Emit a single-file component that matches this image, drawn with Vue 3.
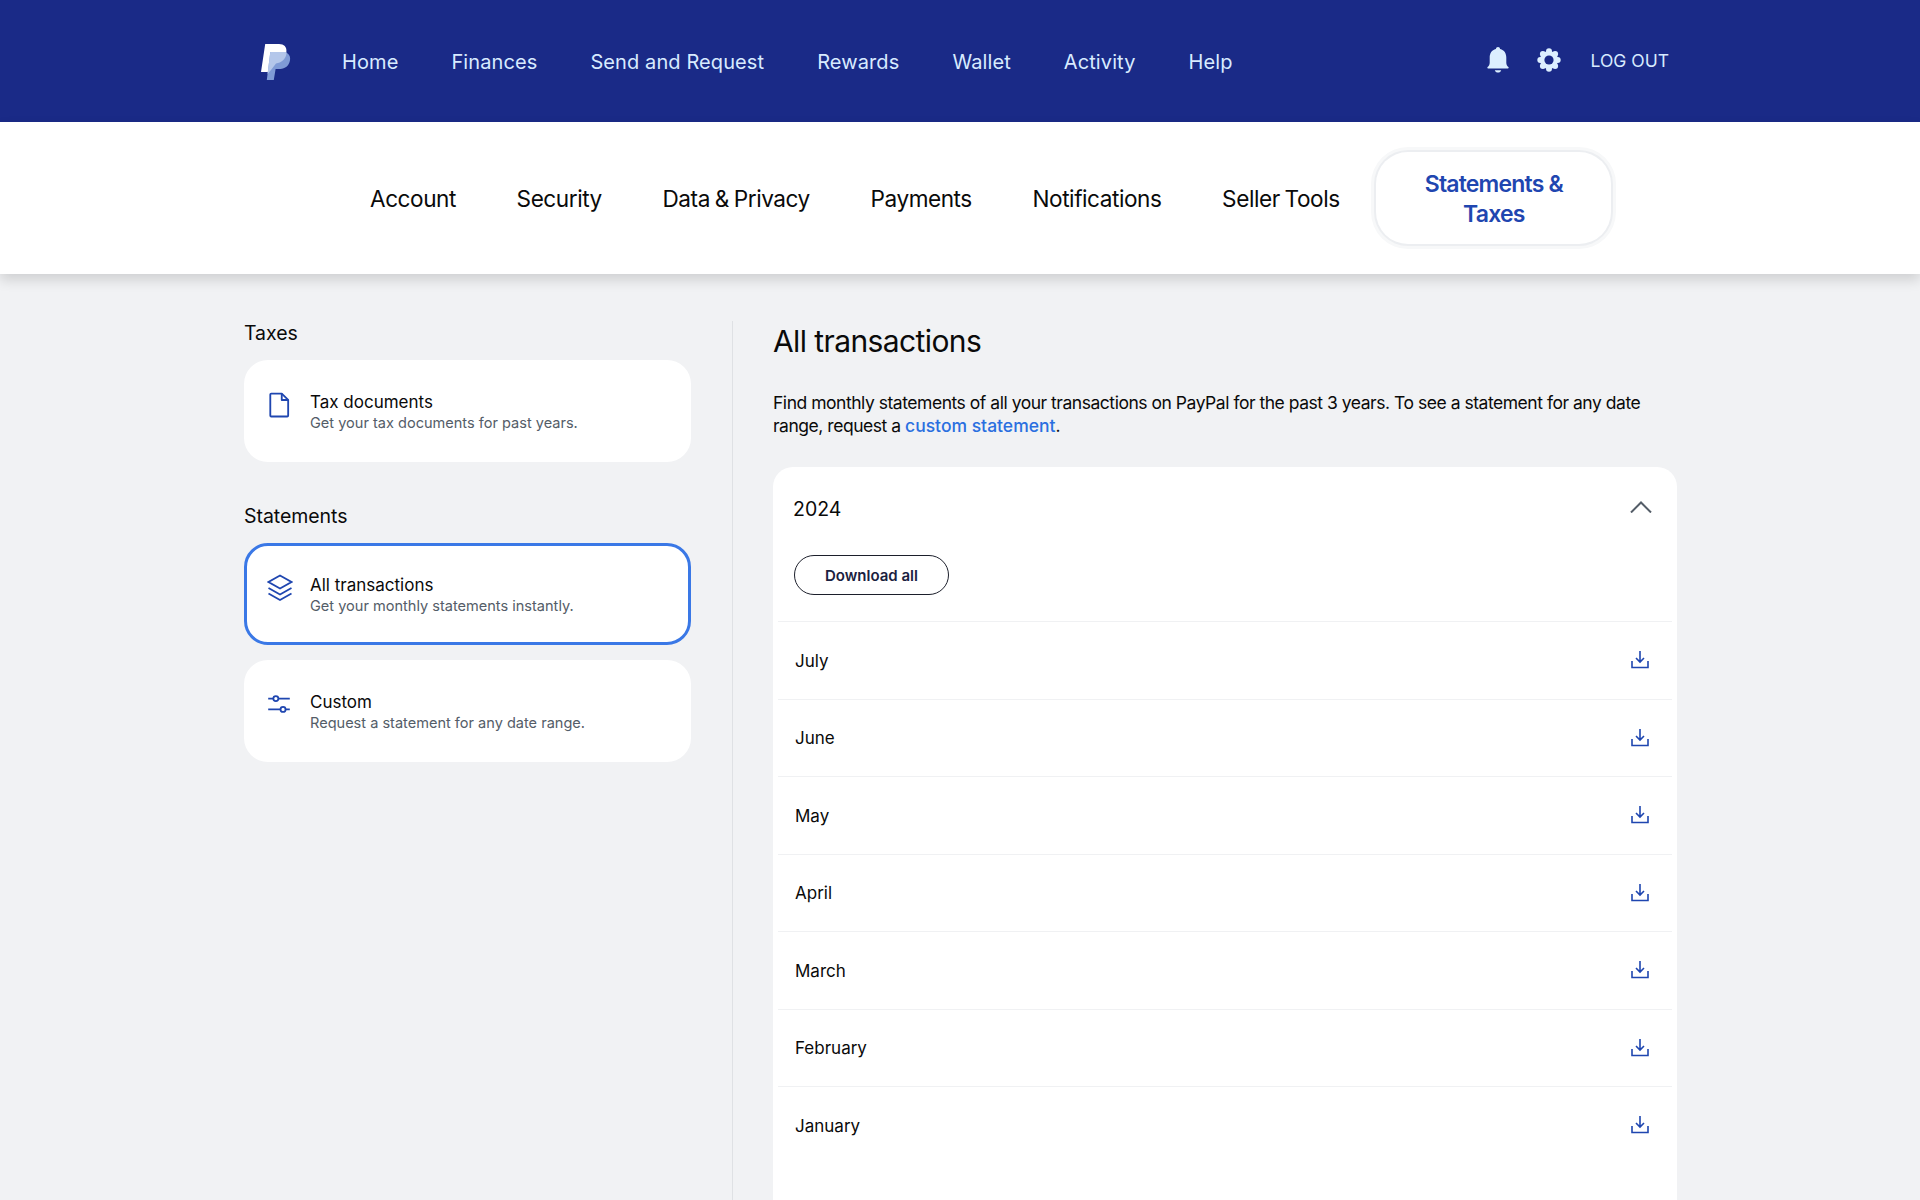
<script setup>
const top = ['Home', 'Finances', 'Send and Request', 'Rewards', 'Wallet', 'Activity', 'Help']
const sub = ['Account', 'Security', 'Data & Privacy', 'Payments', 'Notifications', 'Seller Tools']
const months = ['July', 'June', 'May', 'April', 'March', 'February', 'January']
</script>

<template>
  <div class="page">
    <header class="topbar">
      <svg class="logo" viewBox="0 0 30 36" width="30" height="36">
        <path d="M4.2 0H18c5 0 8 3 7.4 7.6C24.7 13 21 17 15 17.300L9.800 28H0Z" fill="#fff" />
        <path d="M9.300 8H21.500C26.500 8 30 11.200 29 16.300 28 21.700 24 25 19.300 25H14.600L12.800 36H5.800Z" fill="#7f9bd6" />
        <path d="M9.300 8H25.300C25.500 8.500 25.500 9.500 25.300 10.500 24.300 15 20.500 18.800 15 19.400L10 26 6.500 30Z" fill="#b4c7ea" />
      </svg>
      <nav class="top-links">
        <a v-for="t in top" :key="t" class="top-link">{{ t }}</a>
      </nav>
      <div class="top-actions">
        <svg class="bell" viewBox="0 0 22 26" width="22" height="26">
          <path d="M11 0c1.200 0 2 .8 2.100 1.900C17.300 2.900 19.300 6.300 19.300 10.500v5.300c0 2 .8 3.200 2.100 4.200.5.500.3 1.500-.5 1.500H1.100c-.8 0-1-1-.5-1.500 1.300-1 2.100-2.200 2.100-4.200v-5.300C2.700 6.300 4.700 2.900 8.900 1.900 9 .8 9.800 0 11 0Z" fill="#dcefff" />
          <path d="M7.800 23.200h6.400C13.800 24.700 12.500 25.500 11 25.500S8.200 24.700 7.800 23.200Z" fill="#dcefff" />
        </svg>
        <svg class="gear" viewBox="0 0 24 24" width="24" height="24">
          <g fill="#dcefff">
            <circle cx="12" cy="12" r="9" />
            <circle cx="12" cy="3.300" r="3" />
            <circle cx="12" cy="20.700" r="3" />
            <circle cx="3.300" cy="12" r="3" />
            <circle cx="20.700" cy="12" r="3" />
            <circle cx="5.900" cy="5.900" r="3" />
            <circle cx="18.100" cy="5.900" r="3" />
            <circle cx="5.900" cy="18.100" r="3" />
            <circle cx="18.100" cy="18.100" r="3" />
          </g>
          <circle cx="12" cy="12" r="4.600" fill="#1a2a87" />
        </svg>
        <span class="logout">LOG OUT</span>
      </div>
    </header>

    <nav class="subbar">
      <a v-for="s in sub" :key="s" class="sub-link">{{ s }}</a>
      <a class="sub-active">Statements &amp;<br />Taxes</a>
    </nav>

    <div class="content">
      <aside class="side">
        <h2 class="side-title">Taxes</h2>
        <div class="card">
          <svg class="card-icon doc" viewBox="0 0 24 28" width="22" height="26" fill="none" stroke="#1f46b0" stroke-width="2" stroke-linejoin="round">
            <path d="M2.500 2.500a1 1 0 0 1 1-1H15L22 8.500V25.500a1 1 0 0 1-1 1H3.500a1 1 0 0 1-1-1Z" />
            <path d="M15 1.500V8.500H22" />
          </svg>
          <div>
            <div class="card-title">Tax documents</div>
            <div class="card-sub">Get your tax documents for past years.</div>
          </div>
        </div>

        <h2 class="side-title second">Statements</h2>
        <div class="card selected">
          <svg class="card-icon" viewBox="0 0 26 28" width="26" height="28" fill="none" stroke="#1f46b0" stroke-width="1.800" stroke-linejoin="miter">
            <path d="M13 1.500 24.500 8 13 14.500 1.500 8Z" />
            <path d="M1.500 14 13 20.500 24.500 14" />
            <path d="M1.500 19.500 13 26 24.500 19.500" />
          </svg>
          <div>
            <div class="card-title">All transactions</div>
            <div class="card-sub">Get your monthly statements instantly.</div>
          </div>
        </div>
        <div class="card custom">
          <svg class="card-icon" viewBox="0 0 26 20" width="24" height="18" fill="none" stroke="#1f46b0" stroke-width="2">
            <path d="M1 4H6.500M12.500 4H25M1 16H14.500M20.500 16H25" />
            <circle cx="9.500" cy="4" r="2.800" />
            <circle cx="17.500" cy="16" r="2.800" />
          </svg>
          <div>
            <div class="card-title">Custom</div>
            <div class="card-sub">Request a statement for any date range.</div>
          </div>
        </div>
      </aside>

      <main class="main">
        <h1 class="title">All transactions</h1>
        <p class="intro">
          Find monthly statements of all your transactions on PayPal for the past 3 years. To see a statement for any date
          range, request a <a class="link">custom statement</a>.
        </p>
        <section class="panel">
          <div class="year-row">
            <span class="year">2024</span>
            <svg viewBox="0 0 22 12" width="22" height="12" fill="none" stroke="#545d68" stroke-width="2">
              <path d="M1 11.500 11 1.500 21 11.500" />
            </svg>
          </div>
          <button class="download-all">Download all</button>
          <div v-for="m in months" :key="m" class="month">
            <span class="month-name">{{ m }}</span>
            <svg viewBox="0 0 18 18" width="18" height="18" fill="none" stroke="#1f46b0" stroke-width="1.600">
              <path d="M9 0V10.500M5 7 9 11 13 7" />
              <path d="M1 10V16.500H17V10" />
            </svg>
          </div>
        </section>
      </main>
    </div>
  </div>
</template>

<style>
html, body { margin: 0; padding: 0; background: #f1f2f4; }
</style>

<style scoped>
.page {
  height: 1200px;
  overflow: hidden;
  background: #f1f2f4;
  font-family: Inter, "Liberation Sans", sans-serif;
  color: #0a0a0a;
}
.topbar {
  height: 122px;
  background: #1a2a87;
  display: flex;
  align-items: center;
  padding: 0 251px 0 261px;
  box-sizing: border-box;
}
.logo { margin-top: 2px; }
.top-links { display: flex; gap: 53px; margin-left: 51px; }
.top-link { color: #d8ebff; font-size: 20px; line-height: 24px; letter-spacing: 0.1px; margin-top: 1px; }
.top-actions { margin-left: auto; display: flex; align-items: center; }
.bell { margin-top: -3px; }
.gear { margin-left: 28px; margin-top: -3px; }
.logout { margin-left: 30px; margin-top: -1px; color: #d8ebff; font-size: 17.500px; }
.subbar {
  height: 152px;
  background: #fff;
  box-sizing: border-box;
  display: flex;
  align-items: center;
  gap: 60.700px;
  padding-left: 370px;
  box-shadow: 0 6px 12px rgba(0, 0, 0, 0.14);
  position: relative;
}
.sub-link { font-size: 22.600px; color: #0a0a0a; letter-spacing: -0.45px; word-spacing: -1px; }
.sub-active {
  width: 235px;
  height: 92px;
  margin-left: -24px;
  padding-top: 2px;
  box-sizing: border-box;
  display: flex;
  align-items: center;
  justify-content: center;
  text-align: center;
  border-radius: 32px;
  background: #fff;
  box-shadow: 0 0 0 2px #eceef1, 0 0 0 5px #f7f8f9;
  color: #1f46b0;
  font-size: 23px;
  font-weight: 600;
  line-height: 30px;
  letter-spacing: -0.8px;
}
.content { display: flex; padding: 47px 0 0 244px; }
.side { width: 447px; }
.side-title { margin: 0 0 14px; font-size: 19.500px; line-height: 25px; font-weight: 400; letter-spacing: -0.05px; }
.side-title.second { margin-top: 42px; }
.card {
  height: 102px;
  box-sizing: border-box;
  background: #fff;
  border-radius: 24px;
  display: flex;
  align-items: center;
  position: relative;
  padding: 2px 0 0 66px;
}
.card-icon { position: absolute; left: 22px; top: 31px; }
.card-icon.doc { left: 24px; top: 32px; }
.card.selected { border: 3px solid #3a78e6; padding-left: 63px; }
.card.selected .card-icon { left: 20px; top: 28px; }
.card.custom { margin-top: 15px; }
.card.custom .card-icon { left: 23px; top: 35px; }
.card-title { font-size: 17px; line-height: 22px; }
.card-sub { font-size: 14.550px; line-height: 21px; color: #545d68; }
.main {
  margin-left: 41px;
  border-left: 1px solid #dfe1e4;
  padding-left: 40px;
  width: 904px;
}
.title { margin: 0; font-size: 30px; font-weight: 400; line-height: 40px; letter-spacing: -0.6px; }
.intro { margin: 30px 0 0; font-size: 17.500px; line-height: 23px; letter-spacing: -0.47px; }
.link { color: #2a6fe0; letter-spacing: 0; font-weight: 500; }
.panel {
  margin-top: 30px;
  background: #fff;
  border-radius: 20px;
  padding: 0 5px 100px;
}
.year-row {
  height: 82px;
  display: flex;
  align-items: center;
  justify-content: space-between;
  padding: 0 20px 0 15px;
}
.year-row svg { margin-top: -3px; }
.year { font-size: 19.500px; margin-top: 2px; }
.download-all {
  display: block;
  margin: 6px 0 26px 16px;
  width: 155px;
  height: 40px;
  border: 1.500px solid #1c1f2b;
  border-radius: 20px;
  background: #fff;
  font: 600 15px Inter, sans-serif;
  color: #1a2140;
  box-sizing: border-box;
}
.month {
  height: 77.500px;
  border-top: 1.500px solid #f0f1f3;
  box-sizing: border-box;
  display: flex;
  align-items: center;
  justify-content: space-between;
  padding: 0 23px 0 17px;
  font-size: 17px;
}
.month-name { margin-top: 1px; }
</style>
